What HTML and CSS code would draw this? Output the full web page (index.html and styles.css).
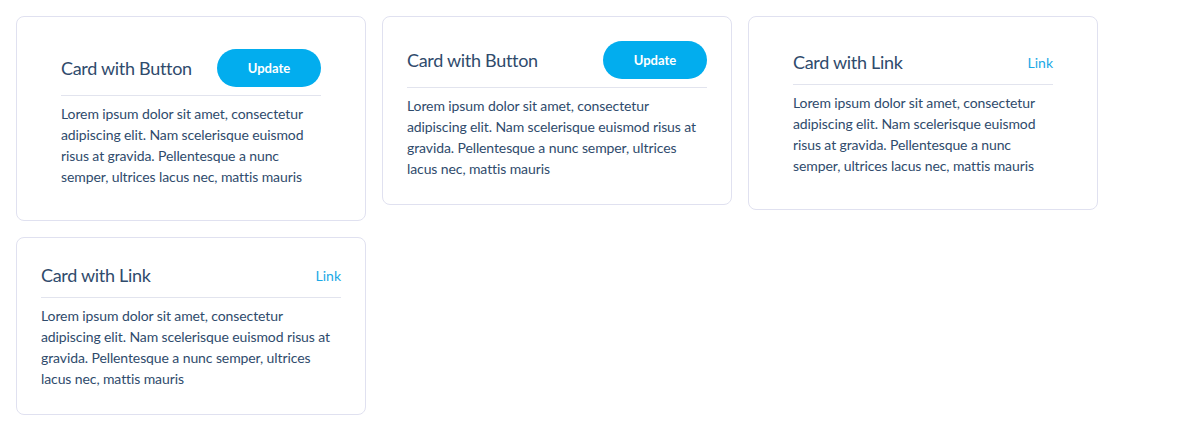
FILE: index.html
```html
<!DOCTYPE html>
<html>
<head>
<meta charset="utf-8">
<link rel="stylesheet" href="styles.css">
</head>
<body>
<div class="cards">
  <div class="card card-lg">
    <div class="card-header">
      <h3 class="card-title">Card with Button</h3>
      <button class="btn">Update</button>
    </div>
    <p class="card-text">Lorem ipsum dolor sit amet, consectetur adipiscing elit. Nam scelerisque euismod risus at gravida. Pellentesque a nunc semper, ultrices lacus nec, mattis mauris</p>
  </div>
  <div class="card">
    <div class="card-header">
      <h3 class="card-title">Card with Button</h3>
      <button class="btn">Update</button>
    </div>
    <p class="card-text">Lorem ipsum dolor sit amet, consectetur adipiscing elit. Nam scelerisque euismod risus at gravida. Pellentesque a nunc semper, ultrices lacus nec, mattis mauris</p>
  </div>
  <div class="card card-lg">
    <div class="card-header">
      <h3 class="card-title">Card with Link</h3>
      <a class="link" href="#">Link</a>
    </div>
    <p class="card-text">Lorem ipsum dolor sit amet, consectetur adipiscing elit. Nam scelerisque euismod risus at gravida. Pellentesque a nunc semper, ultrices lacus nec, mattis mauris</p>
  </div>
  <div class="card">
    <div class="card-header">
      <h3 class="card-title">Card with Link</h3>
      <a class="link" href="#">Link</a>
    </div>
    <p class="card-text">Lorem ipsum dolor sit amet, consectetur adipiscing elit. Nam scelerisque euismod risus at gravida. Pellentesque a nunc semper, ultrices lacus nec, mattis mauris</p>
  </div>
</div>
</body>
</html>
```

FILE: styles.css
```css
* { box-sizing: border-box; }
body {
  margin: 16px;
  background: #ffffff;
  font-family: "Lato", "Noto Sans", sans-serif;
  color: #2f4b6c;
}
.cards {
  display: flex;
  flex-wrap: wrap;
  align-items: flex-start;
  gap: 16px;
}
.card {
  width: 350px;
  border: 1px solid #e0e1f0;
  border-radius: 8px;
  background: #fff;
  padding: 24px;
}
.card-lg {
  padding: 32px 44px;
}
.card-header {
  display: flex;
  align-items: center;
  justify-content: space-between;
  padding-bottom: 8px;
  border-bottom: 1px solid #e2e4ee;
}
.card-title {
  margin: 0;
  font-size: 18px;
  font-weight: 400;
  line-height: 27px;
  letter-spacing: -0.3px;
  color: #2f4b6c;
}
.btn {
  width: 104px;
  height: 38px;
  border: none;
  border-radius: 19px;
  background: #02adee;
  color: #fff;
  font-family: inherit;
  font-size: 13px;
  font-weight: 700;
  padding: 0;
}
.link {
  color: #1ba9e6;
  font-size: 14px;
  text-decoration: none;
}
.card-text {
  margin: 7px 0 1px;
  font-size: 14px;
  line-height: 21px;
  letter-spacing: -0.1px;
  color: #2f4b6c;
}
```
